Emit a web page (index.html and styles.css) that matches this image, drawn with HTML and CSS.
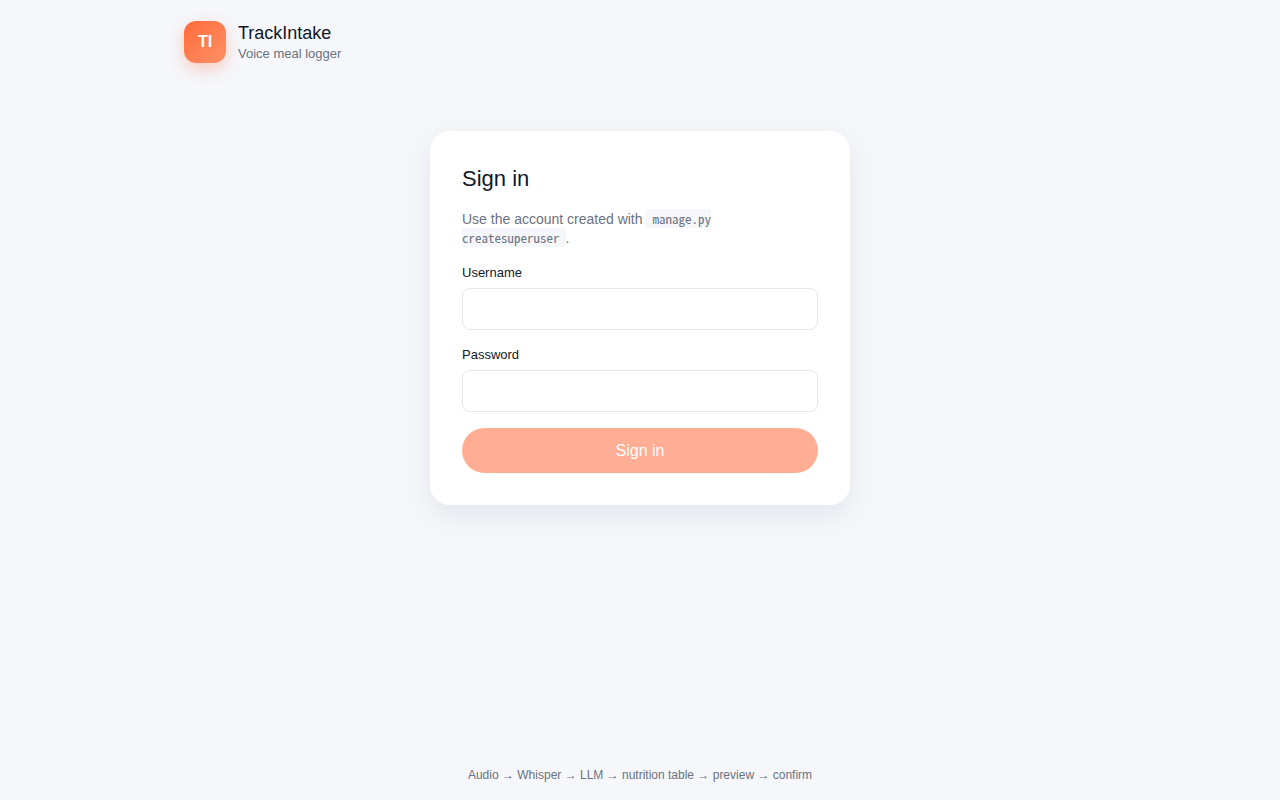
FILE: index.html
```
<!DOCTYPE html>
<html lang="en">
<head>
    <meta charset="utf-8">
    <meta name="viewport" content="width=device-width, initial-scale=1.0">
    <title>TrackIntake</title>
    <link rel="stylesheet" href="styles.css">
</head>
<body>
    <header class="topbar">
        <div class="logo">TI</div>
        <div class="brand">
            <div class="brand-name">TrackIntake</div>
            <div class="brand-tagline">Voice meal logger</div>
        </div>
    </header>

    <main class="content">
        <form class="card" method="post">
            <h1>Sign in</h1>
            <p class="hint">Use the account created with <code>manage.py createsuperuser</code>.</p>

            <div class="field">
                <label for="username">Username</label>
                <input type="text" id="username" name="username" autocomplete="username">
            </div>

            <div class="field">
                <label for="password">Password</label>
                <input type="password" id="password" name="password" autocomplete="current-password">
            </div>

            <button type="submit" class="btn" disabled>Sign in</button>
        </form>
    </main>

    <footer class="footer">Audio → Whisper → LLM → nutrition table → preview → confirm</footer>
</body>
</html>
```
FILE: styles.css
```
* {
    box-sizing: border-box;
}

body {
    margin: 0;
    min-height: 100vh;
    display: flex;
    flex-direction: column;
    background: #f5f7fb;
    color: #111827;
    font-family: "Liberation Sans", Arial, sans-serif;
    font-size: 16px;
}

.topbar {
    display: flex;
    align-items: center;
    gap: 12px;
    width: 100%;
    max-width: 960px;
    margin: 0 auto;
    padding: 21px 24px 20px;
}

.logo {
    display: grid;
    place-items: center;
    width: 42px;
    height: 42px;
    border-radius: 12px;
    background: linear-gradient(135deg, #ff6b3d, #ff9166);
    box-shadow: 0 6px 16px rgba(255, 107, 61, 0.3);
    color: #fff;
    font-size: 16px;
    font-weight: bold;
}

.brand-name {
    font-size: 18px;
    line-height: 24px;
}

.brand-tagline {
    color: #6b7280;
    font-size: 13px;
    line-height: 18px;
}

.content {
    flex: 1;
    width: 100%;
    padding: 48px 24px;
}

.card {
    display: flex;
    flex-direction: column;
    gap: 16px;
    max-width: 420px;
    margin: 0 auto;
    padding: 32px;
    border-radius: 20px;
    background: #fff;
    box-shadow: 0 10px 30px rgba(17, 24, 39, 0.08);
}

.card h1 {
    margin: 0;
    font-size: 22px;
    font-weight: normal;
    line-height: 31px;
}

.hint {
    margin: 0;
    color: #6b7280;
    font-size: 14px;
    line-height: 19px;
}

.hint code {
    padding: 0 6px;
    border-radius: 4px;
    background: #f5f7fb;
    font-family: "Noto Sans Mono CJK SC", "Liberation Mono", monospace;
    font-size: 13px;
    line-height: 1;
}

.field {
    display: flex;
    flex-direction: column;
    gap: 6px;
}

.field label {
    font-size: 13px;
    line-height: 18px;
}

.field input {
    width: 100%;
    height: 42px;
    padding: 10px 12px;
    border: 1px solid #e5e7eb;
    border-radius: 8px;
    background: #fff;
    color: inherit;
    font: inherit;
}

.btn {
    padding: 12px 20px;
    border: none;
    border-radius: 999px;
    background: #ff6b3d;
    color: #fff;
    font-family: inherit;
    font-size: 16px;
    line-height: 21px;
    cursor: pointer;
}

.btn:disabled {
    opacity: 0.55;
    cursor: default;
}

.footer {
    padding: 16px 24px;
    color: #6b7280;
    font-size: 12px;
    line-height: 18px;
    text-align: center;
}
```
